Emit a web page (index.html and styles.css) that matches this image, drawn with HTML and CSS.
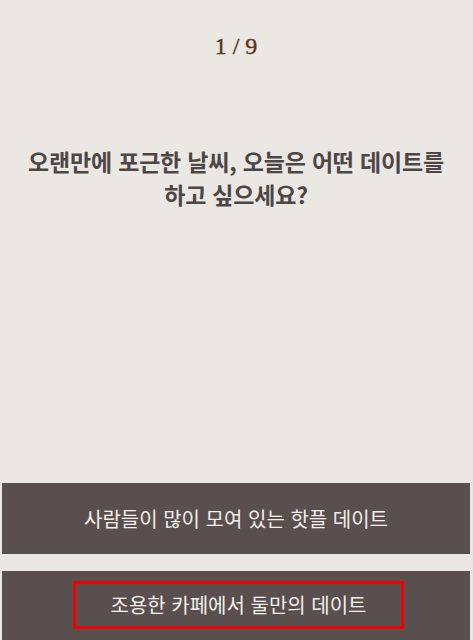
FILE: index.html
```html
<!DOCTYPE html>
<html lang="ko">
<head>
<meta charset="utf-8">
<link rel="stylesheet" href="styles.css">
</head>
<body>
<div class="page">
  <div class="counter">1 / 9</div>
  <h1 class="question">오랜만에 포근한 날씨, 오늘은 어떤 데이트를<br>하고 싶으세요?</h1>
  <div class="spacer"></div>
  <div class="options">
    <button class="option"><span class="label">사람들이 많이 모여 있는 핫플 데이트</span></button>
    <button class="option"><span class="label focused">조용한 카페에서 둘만의 데이트</span></button>
  </div>
</div>
</body>
</html>
```

FILE: styles.css
```css
html, body {
  margin: 0;
  padding: 0;
  background: #ebe7e2;
  height: 100%;
  overflow: hidden;
}
.page {
  display: flex;
  flex-direction: column;
  height: 100%;
  padding: 0 3px 0 2px;
  box-sizing: border-box;
}
.counter {
  margin-top: 31px;
  text-align: center;
  font-family: "Liberation Serif", serif;
  font-size: 24px;
  font-weight: 400;
  color: #5a3720;
  line-height: 30px;
  -webkit-text-stroke: 0.4px #5a3720;
}
.question {
  margin: 84px 0 0;
  text-align: center;
  font-family: "Noto Sans CJK KR", sans-serif;
  font-weight: 700;
  font-size: 23px;
  line-height: 33px;
  color: #4d4646;
  letter-spacing: -0.2px;
}
.spacer {
  flex: 1;
}
.options {
  display: flex;
  flex-direction: column;
  gap: 17px;
  margin-bottom: -2px;
}
.option {
  display: flex;
  align-items: center;
  justify-content: center;
  height: 71px;
  border: none;
  margin: 0;
  padding: 0;
  background: #594f4f;
  color: #f3efea;
  font-family: "Noto Sans CJK KR", sans-serif;
  font-size: 20px;
  cursor: pointer;
}
.label {
  display: inline-block;
}
.focused {
  border: 3px solid #f00000;
  padding: 6px 34px 6px 35px;
  line-height: 30px;
  margin-top: -3px;
  margin-left: 4px;
}
```
